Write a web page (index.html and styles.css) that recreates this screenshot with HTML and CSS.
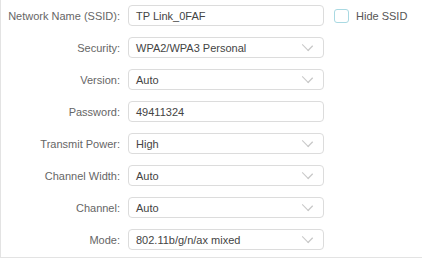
FILE: index.html
```html
<!DOCTYPE html>
<html lang="en">
<head>
    <meta charset="UTF-8">
    <title>Wireless Settings</title>
    <link rel="stylesheet" href="styles.css">
</head>
<body>
    <div class="panel">
        <div class="row">
            <label class="label">Network Name (SSID):</label>
            <div class="field">TP Link_0FAF</div>
            <label class="check"><span class="box"></span>Hide SSID</label>
        </div>
        <div class="row">
            <label class="label">Security:</label>
            <div class="field select">WPA2/WPA3 Personal<span class="chev"></span></div>
        </div>
        <div class="row">
            <label class="label">Version:</label>
            <div class="field select">Auto<span class="chev"></span></div>
        </div>
        <div class="row">
            <label class="label">Password:</label>
            <div class="field">49411324</div>
        </div>
        <div class="row">
            <label class="label">Transmit Power:</label>
            <div class="field select">High<span class="chev"></span></div>
        </div>
        <div class="row">
            <label class="label">Channel Width:</label>
            <div class="field select">Auto<span class="chev"></span></div>
        </div>
        <div class="row">
            <label class="label">Channel:</label>
            <div class="field select">Auto<span class="chev"></span></div>
        </div>
        <div class="row">
            <label class="label">Mode:</label>
            <div class="field select">802.11b/g/n/ax mixed<span class="chev"></span></div>
        </div>
    </div>
</body>
</html>
```
FILE: styles.css
```css
body {
    margin: 0;
    background: #fff;
    font-family: "Liberation Sans", Arial, sans-serif;
    font-size: 11px;
}

.panel {
    height: 252px;
    padding-top: 5px;
    border-left: 1px solid #e3e3e3;
    border-bottom: 1px solid #e3e3e3;
    display: flex;
    flex-direction: column;
    gap: 11px;
}

.row {
    display: flex;
    align-items: center;
    height: 21px;
}

.label {
    width: 119px;
    text-align: right;
    color: #666;
}

.field {
    box-sizing: border-box;
    width: 196px;
    height: 21px;
    margin-left: 8px;
    padding: 0 7px;
    border: 1px solid #dcdcdc;
    border-radius: 4px;
    color: #444;
    display: flex;
    align-items: center;
}

.select {
    justify-content: space-between;
}

.chev {
    width: 6px;
    height: 6px;
    margin-right: 5px;
    margin-top: -4px;
    border-right: 1px solid #c8c8c8;
    border-bottom: 1px solid #c8c8c8;
    transform: rotate(45deg) scaleX(1.3);
}

.check {
    display: flex;
    align-items: center;
    margin-left: 10px;
    color: #555;
}

.box {
    width: 13px;
    height: 12px;
    margin-right: 7px;
    border: 1px solid #a9d9e2;
    border-radius: 3px;
}
```
